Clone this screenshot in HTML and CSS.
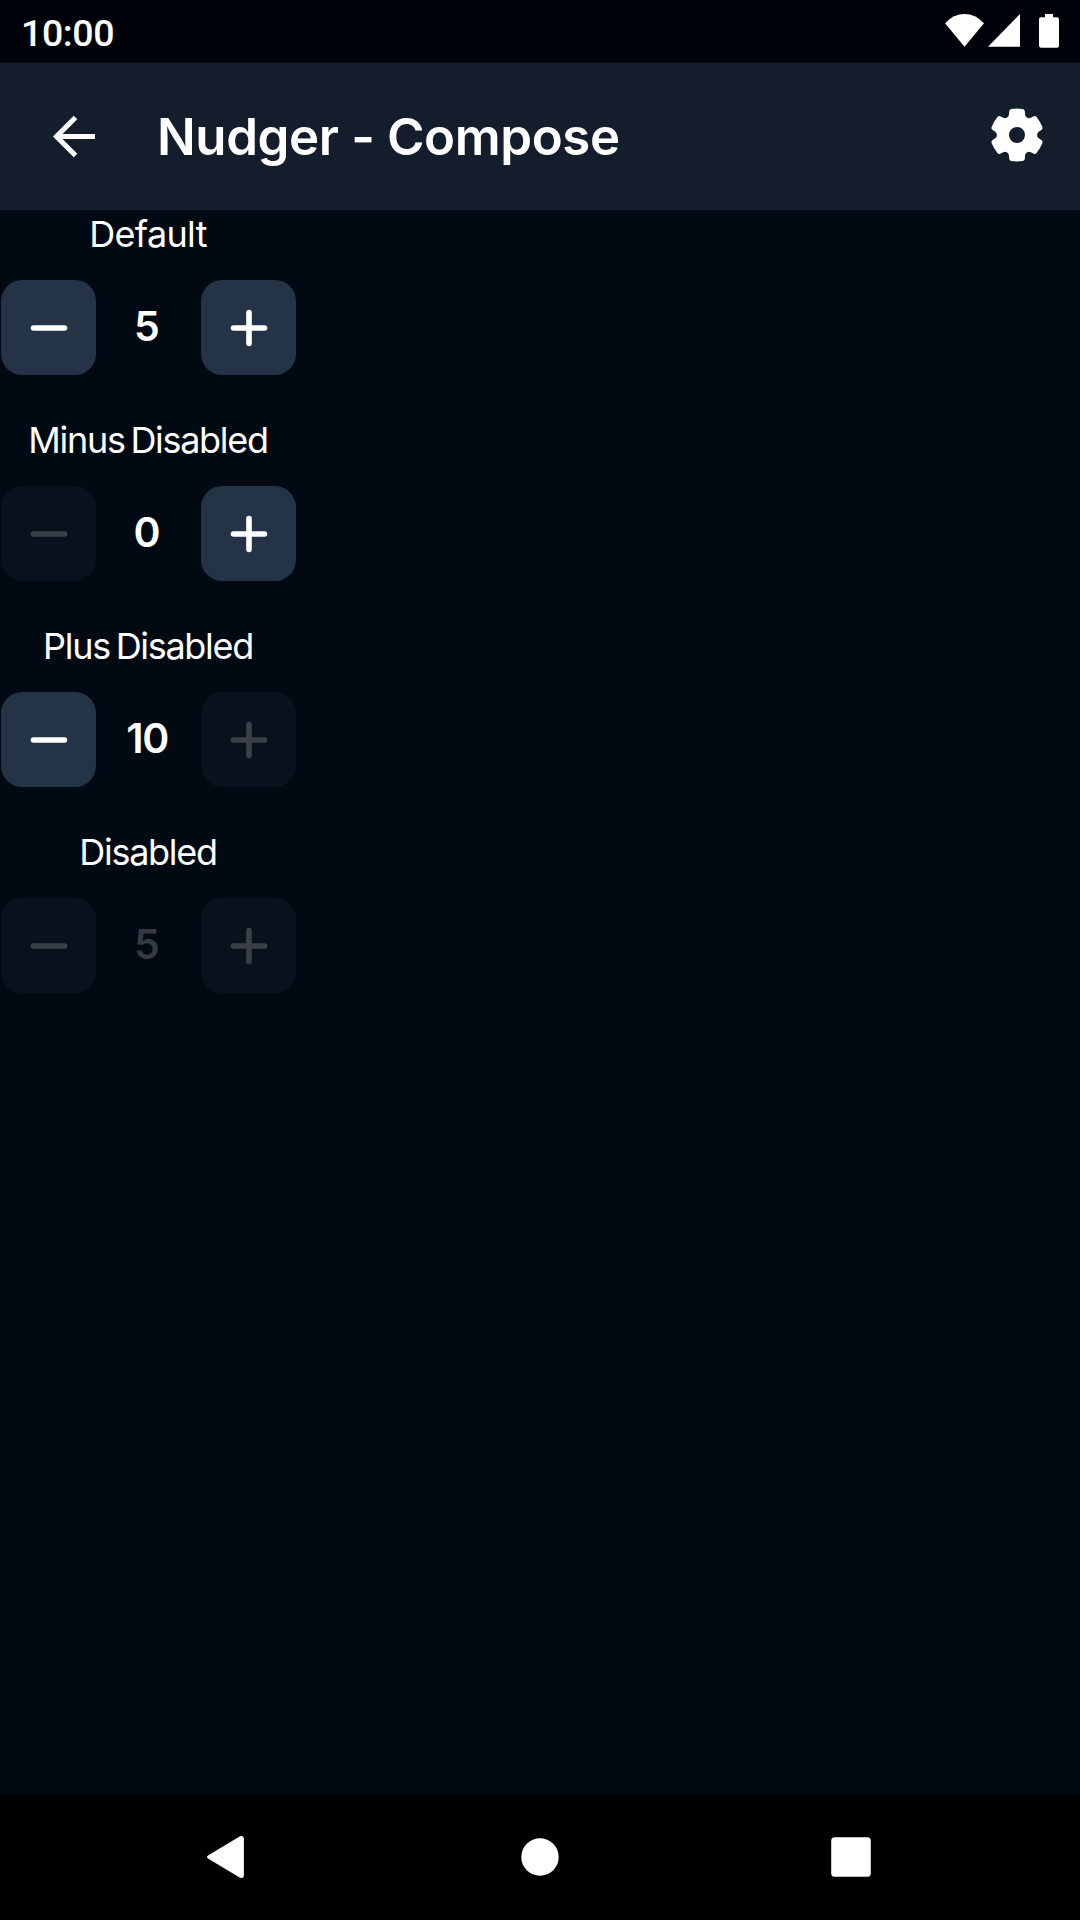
FILE: index.html
```html
<!DOCTYPE html>
<html lang="en">
<head>
<meta charset="utf-8">
<title>Nudger - Compose</title>
<link rel="stylesheet" href="styles.css">
</head>
<body>
<svg class="defs" width="0" height="0" aria-hidden="true">
  <symbol id="minus" viewBox="0 0 95 95"><path d="M32.5 48H63.5"/></symbol>
  <symbol id="plus" viewBox="0 0 95 95"><path d="M32.5 48H63.5M48 32.5V63.5"/></symbol>
  <path id="tooth" d="M-8 -13L-10.4 -17.1Q-8.3 -18.2 -8 -20.5L-7.8 -24Q-7.4 -25.7 -5.8 -26Q0 -26.8 5.8 -26Q7.4 -25.7 7.8 -24L8 -20.5Q8.3 -18.2 10.4 -17.1L8 -13Z"/>
</svg>
<div class="screen">
  <header class="status">
    <span class="time">10:00</span>
    <svg class="status-icons" width="116" height="36" viewBox="944 13 116 36">
      <path d="M964.5 46.7L945 23.3Q953.500 14 964.500 14Q975.500 14 984 23.300Z"/>
      <path d="M988 46.700H1020V14Z"/>
      <path d="M1045 14H1053V17.300H1057Q1059 17.300 1059 19.300V45.700Q1059 47.700 1057 47.700H1041Q1039 47.700 1039 45.700V19.300Q1039 17.300 1041 17.300H1045Z"/>
    </svg>
  </header>
  <div class="appbar">
    <svg class="back" width="44" height="44" viewBox="52 115 44 44"><path d="M75.500 117.500L56.500 136.500L75.500 155.500M57 136.500H95"/></svg>
    <h1 class="title">Nudger - Compose</h1>
    <svg class="settings" width="56" height="56" viewBox="-28 -28 56 56">
      <circle class="ring" r="13.500"/>
      <use href="#tooth"/><use href="#tooth" transform="rotate(60)"/><use href="#tooth" transform="rotate(120)"/>
      <use href="#tooth" transform="rotate(180)"/><use href="#tooth" transform="rotate(240)"/><use href="#tooth" transform="rotate(300)"/>
    </svg>
  </div>
  <main class="content">
    <section class="item">
      <div class="label label-wide">Default</div>
      <div class="nudger">
        <button class="btn"><svg><use href="#minus"/></svg></button>
        <span class="value">5</span>
        <button class="btn"><svg><use href="#plus"/></svg></button>
      </div>
    </section>
    <section class="item">
      <div class="label">Minus Disabled</div>
      <div class="nudger">
        <button class="btn off"><svg><use href="#minus"/></svg></button>
        <span class="value">0</span>
        <button class="btn"><svg><use href="#plus"/></svg></button>
      </div>
    </section>
    <section class="item">
      <div class="label">Plus Disabled</div>
      <div class="nudger">
        <button class="btn"><svg><use href="#minus"/></svg></button>
        <span class="value tight">10</span>
        <button class="btn off"><svg><use href="#plus"/></svg></button>
      </div>
    </section>
    <section class="item">
      <div class="label">Disabled</div>
      <div class="nudger">
        <button class="btn off"><svg><use href="#minus"/></svg></button>
        <span class="value dim">5</span>
        <button class="btn off"><svg><use href="#plus"/></svg></button>
      </div>
    </section>
  </main>
  <nav class="navbar">
    <svg width="44" height="44" viewBox="204 1835 44 44"><path d="M208 1855.500L240 1836.200Q243.700 1835 243.900 1838.500V1875.500Q243.700 1879 240 1877.800L208 1858.500Q206 1857 208 1855.500Z"/></svg>
    <svg width="40" height="40" viewBox="-20 -20 40 40"><circle r="18.700"/></svg>
    <svg width="40" height="40" viewBox="0 0 40 40"><rect x=".2" y=".2" width="39.600" height="39.600" rx="3.500"/></svg>
  </nav>
</div>
</body>
</html>
```
FILE: styles.css
```css
* { box-sizing: border-box; }
body { margin: 0; background: #010913; color: #fff; font-family: Inter, "Liberation Sans", sans-serif; }
svg { display: block; fill: #fff; }
.defs { position: absolute; }
.screen { width: 1080px; height: 1920px; display: flex; flex-direction: column; }

.status { height: 63px; flex: none; background: #01030a; display: flex; justify-content: space-between; padding: 0 20px 0 21px; }
.time { font: 500 37.500px/66px Roboto, sans-serif; letter-spacing: -0.4px; }
.status-icons { margin-top: 13px; }

.appbar { height: 147px; flex: none; background: #141d2b; display: flex; align-items: center; padding: 0 35px 0 52px; }
.back { fill: none; stroke: #fff; stroke-width: 5; }
.title { flex: 1; margin: 0 0 0 61px; font-size: 51px; font-weight: 600; line-height: 64px; letter-spacing: -0.4px; white-space: nowrap; }
.settings { margin-top: -3px; }
.ring { fill: none; stroke: #fff; stroke-width: 11; }

.content { flex: 1; display: flex; flex-direction: column; gap: 41px; width: 297px; padding-left: 1px; }
.item { display: flex; flex-direction: column; gap: 22px; }
.label { padding-right: 2px; font-size: 36px; line-height: 48px; text-align: center; letter-spacing: -1.3px; word-spacing: -3px; white-space: nowrap; }
.label-wide { letter-spacing: -0.65px; }
.nudger { display: flex; height: 95px; }
.btn { width: 95px; height: 95px; padding: 0; border: 0; border-radius: 21px; background: #243346; }
.btn svg { width: 95px; height: 95px; fill: none; stroke: #fff; stroke-width: 5.6; stroke-linecap: round; }
.btn.off { background: #0b111c; }
.btn.off svg { stroke: #3b3f47; }
.value { width: 105px; padding-right: 3px; text-align: center; font-size: 41px; font-weight: 600; line-height: 92px; }
.tight { letter-spacing: -1.5px; }
.dim { color: #343a42; }

.navbar { height: 126px; flex: none; background: #000; display: flex; align-items: center; justify-content: space-between; padding: 0 209px 0 204px; }
```
